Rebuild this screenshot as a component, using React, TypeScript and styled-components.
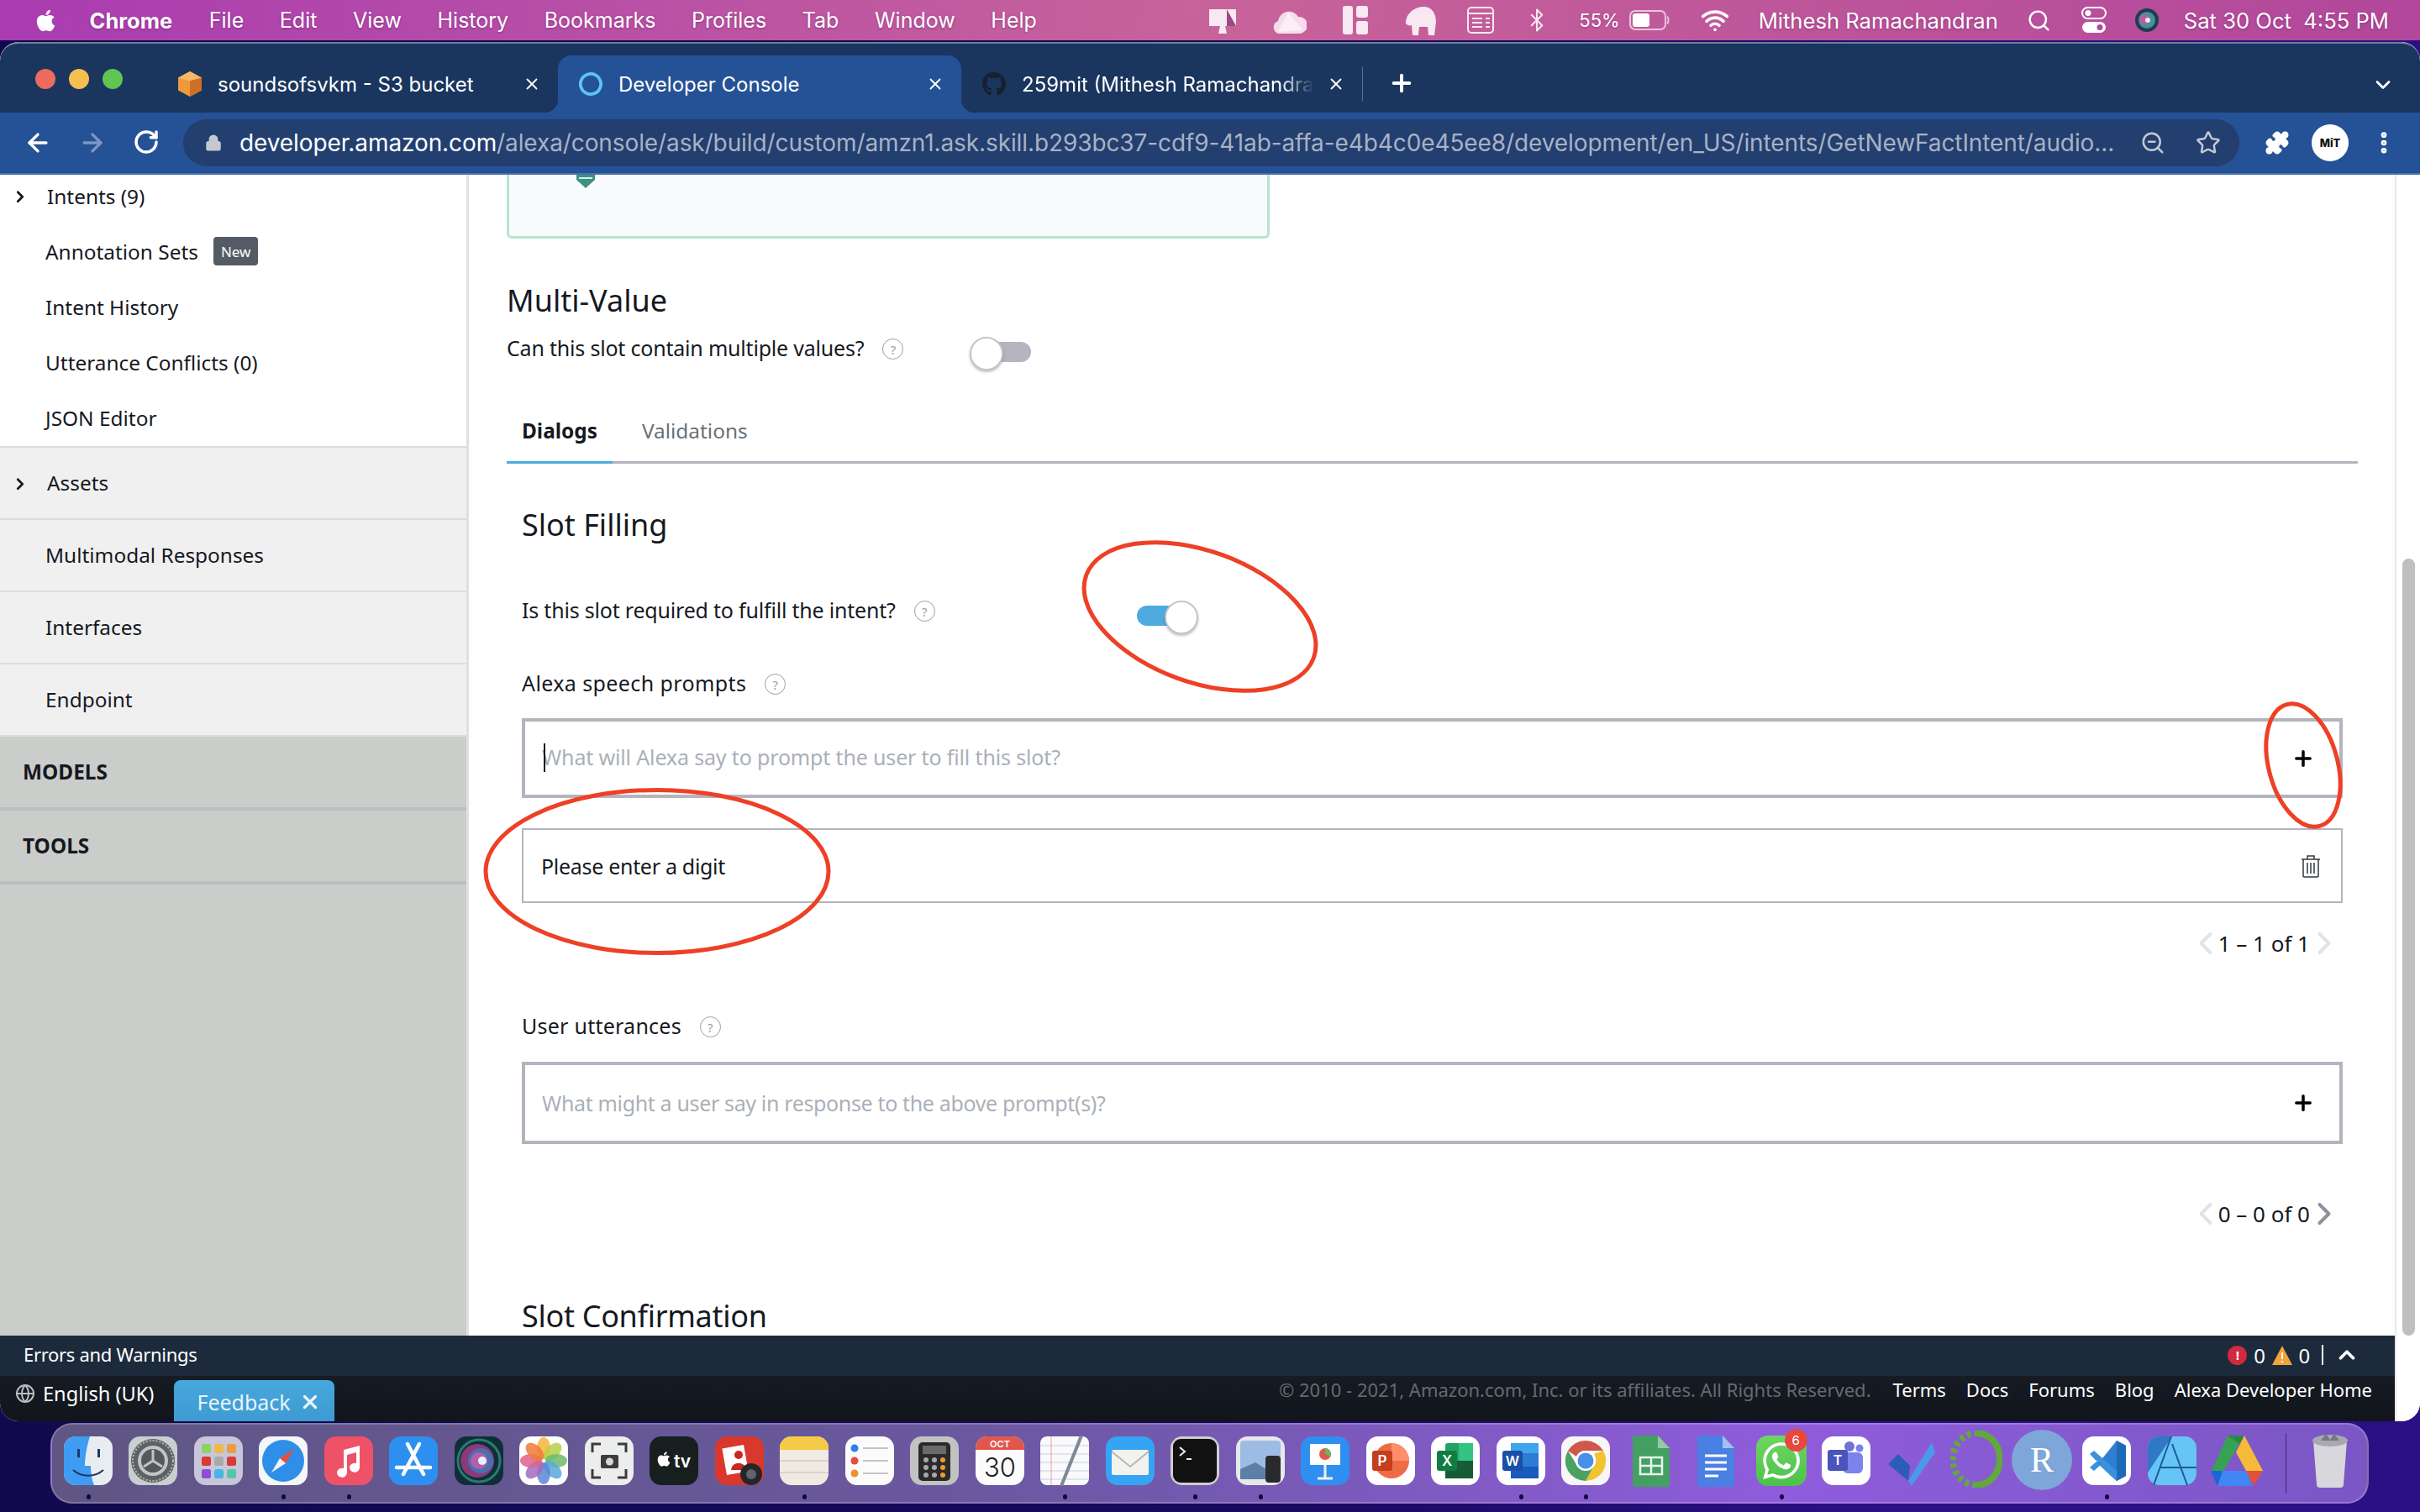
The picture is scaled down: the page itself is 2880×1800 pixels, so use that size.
import React from 'react'
import styled, { createGlobalStyle } from 'styled-components'
import {
    ArrowLeft, ArrowRight, Bluetooth, ChevronDown, ChevronLeft, ChevronRight, ChevronUp, Globe, Lock, MoreVertical,
    Plus, Puzzle, RotateCw, Search, Star, Wifi, X, ZoomOut,
} from 'lucide-react'
import { FaApple, FaGithub, FaWhatsapp } from 'react-icons/fa'

const GlobalStyle = createGlobalStyle`
    html, body {
        margin: 0;
        padding: 0;
        width: 2880px;
        height: 1800px;
        overflow: hidden;
    }

    * {
        box-sizing: border-box;
    }
`

const body = `"Noto Sans", "Liberation Sans", sans-serif`
const system = `Inter, "Liberation Sans", sans-serif`

const Screen = styled.div`
    width: 2880px;
    height: 1800px;
    display: flex;
    flex-direction: column;
    overflow: hidden;
    font-family: ${body};
    color: #16191f;
    background: linear-gradient(100deg, #0f0a4c 0%, #17095c 55%, #2a1084 80%, #2a1084 100%);
`

const MenuBar = styled.div`
    height: 48px;
    flex: none;
    display: flex;
    align-items: center;
    padding: 0 37px 0 40px;
    color: #fff;
    font-family: ${system};
    font-size: 25px;
    text-shadow: 0 1px 3px rgba(70, 0, 70, 0.35);
    background: linear-gradient(90deg, #a93cb1 0%, #c8639a 50%, #b2479b 100%);
`

const MenuGroup = styled.div`
    display: flex;
    align-items: center;
    gap: 42.6px;
`

const AppName = styled.span`
    font-weight: 700;
    margin: 0 1px 0 -5px;
    font-size: 25.5px;
`

const StatusGroup = styled.div`
    margin-left: auto;
    display: flex;
    align-items: center;
    font-size: 25.6px;
`

const StatusItem = styled.span<{ $ml: number }>`
    display: flex;
    align-items: center;
    margin-left: ${p => p.$ml}px;
`

const BatteryText = styled.span`
    font-size: 22px;
`

const Window = styled.div`
    height: 1642px;
    flex: none;
    margin-top: 2px;
    display: flex;
    flex-direction: column;
    border-radius: 22px;
    overflow: hidden;
    background: #fff;
`

const TabStrip = styled.div`
    height: 84px;
    flex: none;
    display: flex;
    align-items: flex-end;
    padding-left: 42px;
    color: #fff;
    font-family: ${system};
    font-size: 24px;
    background: #1a365f;
    border-top: 2px solid #6d7f9b;
    border-radius: 22px 22px 0 0;
`

const Lights = styled.div`
    display: flex;
    gap: 16px;
    margin-right: 41px;
    align-self: center;
    margin-top: 2px;
`

const Light = styled.span<{ $color: string }>`
    width: 24px;
    height: 24px;
    border-radius: 50%;
    background: ${p => p.$color};
`

const Tab = styled.div<{ $active?: boolean; $width: number }>`
    position: relative;
    width: ${p => p.$width}px;
    height: 68px;
    display: flex;
    align-items: center;
    padding: 0 20px 0 25px;
    border-radius: 16px 16px 0 0;
    background: ${p => (p.$active ? '#255296' : 'transparent')};

    ${p => p.$active && `
        &::before, &::after {
            content: '';
            position: absolute;
            bottom: 0;
            width: 16px;
            height: 16px;
        }

        &::before {
            left: -16px;
            background: radial-gradient(circle at 0 0, transparent 16px, #255296 16.5px);
        }

        &::after {
            right: -16px;
            background: radial-gradient(circle at 100% 0, transparent 16px, #255296 16.5px);
        }
    `}
`

const TabIcon = styled.span`
    width: 28px;
    height: 28px;
    flex: none;
    margin-right: 19px;
    display: flex;
    align-items: center;
    justify-content: center;
`

const TabTitle = styled.span<{ $fade?: boolean }>`
    flex: 1;
    min-width: 0;
    overflow: hidden;
    white-space: nowrap;
    ${p => p.$fade && `
        margin-right: 15px;
        -webkit-mask-image: linear-gradient(90deg, #000 88%, transparent 100%);
        mask-image: linear-gradient(90deg, #000 88%, transparent 100%);
    `}
`

const TabSeparator = styled.span`
    width: 1px;
    height: 40px;
    margin-bottom: 14px;
    background: #5d7394;
`

const NewTab = styled.span`
    display: flex;
    margin: 0 0 19px 30px;
`

const TabMenu = styled.span`
    display: flex;
    margin: 0 30px 19px auto;
`

const Toolbar = styled.div`
    height: 74px;
    flex: none;
    display: flex;
    align-items: center;
    padding: 0 29px 0 28px;
    color: #fff;
    background: #255296;
    border-bottom: 2px solid #4a6ea8;
`

const NavGroup = styled.div`
    display: flex;
    gap: 31px;
    margin-right: 28px;
`

const AddressBar = styled.div`
    width: 2447px;
    height: 56px;
    flex: none;
    display: flex;
    align-items: center;
    padding: 0 22px 0 26px;
    border-radius: 28px;
    background: #223f70;
    color: #c3c8d2;
`

const Url = styled.span`
    flex: 1;
    margin-left: 21px;
    min-width: 0;
    white-space: nowrap;
    overflow: hidden;
    font-family: ${system};
    font-size: 28px;
    letter-spacing: -0.1px;
    color: #a9b2c3;

    b {
        font-weight: 400;
        color: #fff;
    }
`

const AddressActions = styled.div`
    display: flex;
    gap: 36px;
    margin-left: 20px;
`

const ToolbarActions = styled.div`
    display: flex;
    align-items: center;
    gap: 26px;
    margin-left: 30px;
`

const Avatar = styled.span`
    width: 44px;
    height: 44px;
    border-radius: 50%;
    display: flex;
    align-items: center;
    justify-content: center;
    background: #fff;
    color: #111;
    font-family: ${system};
    font-size: 13px;
    font-weight: 800;
`

const Viewport = styled.div`
    flex: 1;
    min-height: 0;
    display: flex;
`

const PageColumn = styled.div`
    width: 2850px;
    display: flex;
    flex-direction: column;
`

const Columns = styled.div`
    height: 1382px;
    flex: none;
    display: flex;
    overflow: hidden;
`

const Sidebar = styled.nav`
    width: 558px;
    flex: none;
    overflow: hidden;
    background: #cbcdcb;
    border-right: 3px solid #dfe0e0;
    font-size: 24.4px;
`

const WhiteList = styled.div`
    margin-top: -8px;
    background: #fff;
    border-bottom: 2px solid #dcdcdc;
`

const SideRow = styled.div`
    height: 66.2px;
    display: flex;
    align-items: center;
    padding-left: 54px;
    position: relative;
`

const GreyRow = styled.div`
    height: 86px;
    display: flex;
    align-items: center;
    padding-left: 54px;
    position: relative;
    background: #f0f0f0;
    border-bottom: 2px solid #dcdcdc;
`

const SectionRow = styled.div`
    height: 88px;
    display: flex;
    align-items: center;
    padding-left: 27px;
    font-weight: 700;
    border-bottom: 4px solid #bdbebe;
`

const Caret = styled.span`
    position: absolute;
    left: 13px;
    top: 50%;
    transform: translateY(-44%);
    display: flex;
`

const CaretLabel = styled.span`
    margin-left: 2px;
`

const Badge = styled.span`
    height: 34px;
    margin-left: 18px;
    padding: 0 9px;
    display: flex;
    align-items: center;
    border-radius: 4px;
    background: #545b64;
    color: #fff;
    font-size: 17px;
`

const Main = styled.main`
    position: relative;
    flex: 1;
    overflow: hidden;
    padding: 0 44px 0 45px;
    background: #fff;
`

const Annotations = styled.svg`
    position: absolute;
    left: 0;
    top: 0;
    pointer-events: none;
`

const NoticeCard = styled.div`
    width: 908px;
    height: 76px;
    padding-left: 73px;
    overflow: hidden;
    background: #f7fbfb;
    border: 3px solid #b5e5cf;
    border-top: 0;
    border-radius: 0 0 6px 6px;
`

const BugMark = styled.svg`
    display: block;
    margin-top: -14px;
`

const Heading = styled.h2<{ $top: number; $spacing?: number }>`
    height: 44px;
    margin: ${p => p.$top}px 0 0;
    font-size: 36px;
    line-height: 44px;
    font-weight: 400;
    letter-spacing: ${p => p.$spacing ?? 0}px;
    color: #16191f;
`

const FieldRow = styled.div<{ $top: number; $label: number; $toggleDrop: number }>`
    height: 40px;
    margin-top: ${p => p.$top}px;
    display: grid;
    grid-template-columns: ${p => p.$label}px auto;
    align-items: center;

    & > :last-child {
        margin-top: ${p => p.$toggleDrop}px;
    }
`

const Label = styled.div<{ $top?: number; $spacing: number }>`
    height: 40px;
    margin-top: ${p => p.$top ?? 0}px;
    display: flex;
    align-items: center;
    font-size: 25px;
    letter-spacing: ${p => p.$spacing}px;
    white-space: nowrap;
`

const Help = styled.span`
    width: 25px;
    height: 25px;
    flex: none;
    margin-left: 22px;
    margin-top: 3px;
    display: flex;
    align-items: center;
    justify-content: center;
    border: 1px solid #9a9ea6;
    border-radius: 50%;
    color: #9a9ea6;
    font-size: 15px;
`

const ToggleTrack = styled.span<{ $on?: boolean }>`
    position: relative;
    width: 73px;
    height: 24px;
    display: block;
    border-radius: 12px;
    background: ${p => (p.$on ? 'linear-gradient(90deg, #4dabe0 75%, transparent 75%)' : 'linear-gradient(90deg, transparent 25%, #b5b5bf 25%)')};

    &::after {
        content: '';
        position: absolute;
        top: -6px;
        ${p => (p.$on ? 'right: 0;' : 'left: 0;')}
        width: 36px;
        height: 36px;
        border-radius: 50%;
        background: #fff;
        border: 2px solid #c4c6cc;
        box-shadow: 0 2px 3px rgba(0, 0, 0, 0.25);
    }
`

const TabBar = styled.div`
    height: 77px;
    margin-top: 41px;
    display: flex;
    gap: 17px;
    border-bottom: 3px solid #b4b4be;
    font-size: 24.4px;
`

const TabLink = styled.div<{ $active?: boolean }>`
    height: 74px;
    padding: 0 18px;
    display: flex;
    align-items: center;
    font-weight: ${p => (p.$active ? 700 : 400)};
    color: ${p => (p.$active ? '#16191f' : '#687078')};
    box-shadow: ${p => (p.$active ? '0 3px 0 #4dabe0' : 'none')};
`

const Section = styled.section`
    padding: 0 18px;
`

const InputBox = styled.div<{ $top: number; $height: number }>`
    height: ${p => p.$height}px;
    margin-top: ${p => p.$top}px;
    display: flex;
    align-items: center;
    padding: 0 29px 0 20px;
    border: 4px solid #b4b4be;
    font-size: 25px;
    color: #aab0b8;
    position: relative;
`

const InputText = styled.span<{ $spacing: number; $lift?: number }>`
    flex: 1;
    margin-bottom: ${p => p.$lift ?? 0}px;
    letter-spacing: ${p => p.$spacing}px;
`

const Caretline = styled.span`
    position: absolute;
    left: 22px;
    top: 26px;
    width: 2px;
    height: 34px;
    background: #16191f;
`

const PromptRow = styled.div`
    height: 89px;
    margin-top: 36px;
    display: flex;
    align-items: center;
    padding: 0 24px 0 21px;
    border: 2px solid #b4b4be;
    font-size: 25px;
`

const PromptText = styled.span`
    flex: 1;
    letter-spacing: -0.3px;
`

const Pager = styled.div<{ $top: number }>`
    height: 40px;
    margin-top: ${p => p.$top}px;
    display: flex;
    align-items: center;
    justify-content: flex-end;
    font-size: 26px;
`

const PagerArrow = styled.span<{ $side: 'left' | 'right' }>`
    display: flex;
    margin: ${p => (p.$side === 'left' ? '0 -7px 0 0' : '0 0 0 -5px')};
`

const Scrollbar = styled.div`
    width: 30px;
    flex: none;
    padding: 457px 6px 102px 7px;
    background: #fff;
    border-left: 2px solid #e8e8e8;
`

const Thumb = styled.div`
    height: 100%;
    border-radius: 9px;
    background: #bfbfbf;
`

const ErrorBar = styled.div`
    height: 48px;
    flex: none;
    display: flex;
    align-items: center;
    padding: 0 42px 4px 28px;
    background: #1c2a3b;
    color: #fff;
    font-size: 22px;
    letter-spacing: -0.3px;
`

const Counters = styled.div`
    margin-left: auto;
    display: flex;
    align-items: center;
    gap: 8px;
    font-size: 24px;
    padding-top: 2px;
`

const ErrorDot = styled.span`
    width: 23px;
    height: 23px;
    border-radius: 50%;
    display: flex;
    align-items: center;
    justify-content: center;
    background: #d1293d;
    font-size: 15px;
    font-weight: 700;
`

const CounterRule = styled.span`
    width: 2px;
    height: 24px;
    background: #fff;
    margin: 0 5px 0 6px;
`

const FooterBar = styled.div`
    height: 54px;
    flex: none;
    display: flex;
    align-items: flex-start;
    padding: 0 27px 0 18px;
    background: linear-gradient(180deg, #161b24, #11151b);
    color: #fff;
    font-size: 23.6px;
`

const Language = styled.div`
    height: 42px;
    display: flex;
    align-items: center;
    gap: 9px;
`

const FeedbackTab = styled.div`
    width: 191px;
    height: 49px;
    margin: 5px 0 0 24px;
    padding: 2px 0 0 27px;
    display: flex;
    align-items: center;
    gap: 10px;
    border-radius: 8px 8px 0 0;
    background: linear-gradient(180deg, #46a8dd, #3f9ad2);
    font-size: 25px;
    color: #e8f4fb;
`

const Legal = styled.div`
    margin-left: auto;
    height: 32px;
    display: flex;
    align-items: center;
    gap: 24px;
    font-size: 22px;
`

const Copyright = styled.span`
    color: #666a70;
    margin-right: 2px;
`

const Dock = styled.div`
    width: 2759px;
    height: 96px;
    flex: none;
    margin: 2px 0 0 60px;
    padding: 0 0 0 4px;
    display: flex;
    border: 2px solid rgba(255, 255, 255, 0.2);
    border-radius: 26px;
    background: linear-gradient(90deg, #5f5684 0%, #6a58a0 40%, #8f5cdc 75%, #7a57c4 100%);
`

const DockItem = styled.div<{ $ml?: number }>`
    position: relative;
    width: 77.5px;
    flex: none;
    margin-left: ${p => p.$ml ?? 0}px;
    padding-top: 13px;
    display: flex;
    justify-content: center;
`

const DockDot = styled.span`
    position: absolute;
    left: 50%;
    bottom: 3px;
    width: 5px;
    height: 6px;
    margin-left: -2px;
    border-radius: 50%;
    background: #0c0840;
`

const DockRule = styled.span`
    width: 1px;
    height: 72px;
    margin: 10px 0 0 19px;
    background: #3c2a78;
`

function HelpMark() {
    return <Help>?</Help>
}

function Tile({ fill, children, r = 14 }: { fill: string; children?: React.ReactNode; r?: number }) {
    return (
        <svg width="60" height="60" viewBox="0 0 60 60">
            <rect x="1" y="1" width="58" height="58" rx={r} fill={fill} />
            {children}
        </svg>
    )
}

const dockIcons: { name: string; dot?: boolean; node: React.ReactNode }[] = [
    {
        name: 'Finder', dot: true, node: (
            <Tile fill="#e9edf2">
                <path d="M15 1 H32 C28 14 26 26 26 36 H33 C33 44 34 52 37 59 H15 A14 14 0 0 1 1 45 V15 A14 14 0 0 1 15 1Z" fill="#3f9cf2" />
                <rect x="17" y="16" width="3" height="10" fill="#173a64" />
                <rect x="41" y="16" width="3" height="10" fill="#173a64" />
                <path d="M12 41 C22 50 38 50 48 41" fill="none" stroke="#173a64" strokeWidth="2" />
            </Tile>
        ),
    },
    {
        name: 'System Preferences', node: (
            <Tile fill="#c8cfd1">
                <circle cx="30" cy="30" r="26" fill="#5e6163" />
                <circle cx="30" cy="30" r="24" fill="none" stroke="#b4b8ba" strokeWidth="2" strokeDasharray="2 2" />
                <circle cx="30" cy="30" r="18" fill="#c0c4c6" />
                <circle cx="30" cy="30" r="14" fill="#55585a" />
                <path d="M30 30 V17 M30 30 L19 37 M30 30 L41 37" stroke="#c0c4c6" strokeWidth="3" />
            </Tile>
        ),
    },
    {
        name: 'Launchpad', node: (
            <Tile fill="#c8c6da">
                {['#8ed35e', '#efb84a', '#ef9c3c', '#d83a34', '#a9a9a9', '#d83a34', '#8c4fd8', '#46b6e8', '#56c6a6'].map((c, i) => (
                    <rect key={c + i} x={10 + (i % 3) * 15} y={10 + Math.floor(i / 3) * 15} width="11" height="11" rx="2.5" fill={c} />
                ))}
            </Tile>
        ),
    },
    {
        name: 'Safari', dot: true, node: (
            <Tile fill="#f5f6f7">
                <circle cx="30" cy="30" r="25" fill="#2f8fe8" />
                <path d="M43 16 L26 27 L33 33Z" fill="#ee4a3a" />
                <path d="M16 44 L26 27 L33 33Z" fill="#f2f2f2" />
            </Tile>
        ),
    },
    {
        name: 'Music', dot: true, node: (
            <Tile fill="#ee5266">
                <path d="M24 17 L43 12 V38 A6 5.5 0 1 1 39 33 V20 L28 23 V44 A6 5.5 0 1 1 24 39Z" fill="#fff" />
            </Tile>
        ),
    },
    {
        name: 'App Store', node: (
            <Tile fill="#2d8ff0">
                <path d="M23 10 L42 46 M37 10 L18 46 M10 38 H50" stroke="#fff" strokeWidth="4.5" strokeLinecap="round" />
            </Tile>
        ),
    },
    {
        name: 'Siri', node: (
            <Tile fill="#0f2f38">
                <circle cx="30" cy="30" r="25" fill="none" stroke="#2a7a70" strokeWidth="3" />
                <circle cx="28" cy="30" r="20" fill="#8a3a78" />
                <circle cx="32" cy="30" r="15" fill="#4a6fb0" />
                <circle cx="30" cy="30" r="10" fill="#b45fa8" />
                <circle cx="34" cy="30" r="5" fill="#e8f0ff" />
            </Tile>
        ),
    },
    {
        name: 'Photos', node: (
            <Tile fill="#fff">
                {['#f2b63c', '#b9cf4a', '#6dbb6a', '#5aa8d8', '#5d86d6', '#a16bc0', '#e0628a', '#ee7a3a'].map((c, i) => (
                    <ellipse key={c} cx="30" cy="15" rx="8" ry="13" fill={c} opacity="0.85" transform={`rotate(${i * 45} 30 30)`} />
                ))}
            </Tile>
        ),
    },
    {
        name: 'Screenshot', node: (
            <Tile fill="#eceded">
                <path d="M10 20 V10 H20 M40 10 H50 V20 M50 40 V50 H40 M20 50 H10 V40" fill="none" stroke="#3c3c3e" strokeWidth="3" />
                <rect x="20" y="23" width="21" height="16" rx="2" fill="#3c3c3e" />
                <circle cx="30.5" cy="31" r="4.5" fill="#d8d8d8" />
            </Tile>
        ),
    },
    {
        name: 'TV', node: (
            <Tile fill="#17201f">
                <FaApple x="8" y="18" size={20} color="#fff" />
                <text x="40" y="38" textAnchor="middle" fill="#fff" fontFamily="Inter, sans-serif" fontSize="21" fontWeight="600">tv</text>
            </Tile>
        ),
    },
    {
        name: 'Photo Booth', node: (
            <Tile fill="#d8392c">
                <rect x="12" y="13" width="26" height="32" fill="#fff" transform="rotate(-10 25 29)" />
                <circle cx="29" cy="23" r="5" fill="#c8281e" />
                <path d="M20 41 C21 30 37 30 38 41Z" fill="#c8281e" />
                <circle cx="44" cy="46" r="13" fill="#26262a" />
                <circle cx="44" cy="46" r="6" fill="#61636a" />
            </Tile>
        ),
    },
    {
        name: 'Notes', dot: true, node: (
            <Tile fill="#efebe3">
                <path d="M1 15 A14 14 0 0 1 15 1 H45 A14 14 0 0 1 59 15 V17 H1Z" fill="#f6ca46" />
                <path d="M1 30 H59 M1 44 H59" stroke="#d8d4cc" strokeWidth="2" />
            </Tile>
        ),
    },
    {
        name: 'Reminders', node: (
            <Tile fill="#fbfbfb">
                <circle cx="12" cy="15" r="4.5" fill="#2f7fe8" />
                <circle cx="12" cy="30" r="4.5" fill="#e84a3c" />
                <circle cx="12" cy="45" r="4.5" fill="#ee9230" />
                <path d="M22 15 H52 M22 30 H52 M22 45 H52" stroke="#c4c4c4" strokeWidth="2" />
            </Tile>
        ),
    },
    {
        name: 'Calculator', node: (
            <Tile fill="#c2c2c2">
                <rect x="11" y="8" width="38" height="46" rx="5" fill="#2a2a2c" />
                <rect x="16" y="12" width="28" height="10" fill="#6a6a6a" />
                {[0, 1, 2, 3, 4, 5, 6, 7, 8].map(i => (
                    <circle key={i} cx={20 + (i % 3) * 10} cy={29 + Math.floor(i / 3) * 9} r="3" fill={i % 3 === 2 ? '#ee9a30' : '#a8a8a8'} />
                ))}
            </Tile>
        ),
    },
    {
        name: 'Calendar', node: (
            <Tile fill="#fbfbfb">
                <path d="M1 17 V15 A14 14 0 0 1 15 1 H45 A14 14 0 0 1 59 15 V17Z" fill="#e2574c" />
                <text x="30" y="14" textAnchor="middle" fill="#fff" fontFamily="Inter, sans-serif" fontSize="11" fontWeight="600">OCT</text>
                <text x="30" y="49" textAnchor="middle" fill="#222" fontFamily="Inter, sans-serif" fontSize="31" fontWeight="300">30</text>
            </Tile>
        ),
    },
    {
        name: 'TextEdit', dot: true, node: (
            <Tile fill="#fafafa" r={8}>
                <path d="M1 12 H59 M1 22 H59 M1 32 H59 M1 42 H59 M1 52 H59" stroke="#c8cde8" strokeWidth="1" />
                <path d="M14 1 V59" stroke="#e8a0a0" strokeWidth="1" />
                <path d="M50 0 L26 60" stroke="#7d8a96" strokeWidth="4" />
            </Tile>
        ),
    },
    {
        name: 'Mail', node: (
            <Tile fill="#35a4f2">
                <rect x="8" y="17" width="44" height="30" rx="2" fill="#f2f2ee" />
                <path d="M8 19 L30 37 L52 19" fill="none" stroke="#b8b8b0" strokeWidth="2" />
            </Tile>
        ),
    },
    {
        name: 'Terminal', dot: true, node: (
            <Tile fill="#cfcfcf">
                <rect x="4" y="4" width="52" height="52" rx="9" fill="#111" />
                <path d="M12 14 L18 19 L12 24 M20 28 H26" fill="none" stroke="#eee" strokeWidth="2" />
            </Tile>
        ),
    },
    {
        name: 'Preview', dot: true, node: (
            <Tile fill="#e6e8ea">
                <rect x="6" y="6" width="48" height="46" rx="4" fill="#9cbce4" />
                <path d="M6 40 L24 32 L40 42 L54 36 V52 H6Z" fill="#5c7fa6" />
                <rect x="36" y="24" width="18" height="32" rx="4" fill="#2a2a2e" />
            </Tile>
        ),
    },
    {
        name: 'Keynote', node: (
            <Tile fill="#2f8ff0">
                <rect x="12" y="10" width="36" height="25" fill="#fff" />
                <circle cx="30" cy="22" r="7" fill="#e2574c" />
                <path d="M30 22 V15 A7 7 0 0 1 36 25Z" fill="#5dbb63" />
                <path d="M30 35 V50 M21 51 H39" stroke="#f0f0f0" strokeWidth="3" />
            </Tile>
        ),
    },
    {
        name: 'PowerPoint', node: (
            <Tile fill="#fff">
                <circle cx="31" cy="30" r="21" fill="#ed6c47" />
                <path d="M31 9 A21 21 0 0 1 52 30 H31Z" fill="#ff8f6b" />
                <rect x="8" y="18" width="24" height="24" rx="3" fill="#c43e1c" />
                <text x="20" y="36" textAnchor="middle" fill="#fff" fontFamily="Inter, sans-serif" fontSize="17" fontWeight="600">P</text>
            </Tile>
        ),
    },
    {
        name: 'Excel', node: (
            <Tile fill="#fff">
                <rect x="18" y="9" width="33" height="42" rx="3" fill="#21a366" />
                <rect x="34" y="9" width="17" height="21" fill="#33c481" />
                <rect x="18" y="30" width="33" height="21" fill="#185c37" />
                <rect x="8" y="18" width="24" height="24" rx="3" fill="#107c41" />
                <text x="20" y="36" textAnchor="middle" fill="#fff" fontFamily="Inter, sans-serif" fontSize="17" fontWeight="600">X</text>
            </Tile>
        ),
    },
    {
        name: 'Word', dot: true, node: (
            <Tile fill="#fff">
                <rect x="18" y="9" width="33" height="42" rx="3" fill="#2b7cd3" />
                <rect x="18" y="9" width="33" height="12" fill="#41a5ee" />
                <rect x="18" y="37" width="33" height="14" fill="#185abd" />
                <rect x="8" y="18" width="24" height="24" rx="3" fill="#1a4fa8" />
                <text x="20" y="36" textAnchor="middle" fill="#fff" fontFamily="Inter, sans-serif" fontSize="16" fontWeight="600">W</text>
            </Tile>
        ),
    },
    {
        name: 'Chrome', dot: true, node: (
            <Tile fill="#f7f7f7">
                <path d="M30 6 A24 24 0 0 1 51 18 H30 A12 12 0 0 0 19 25 L9 18 A24 24 0 0 1 30 6Z" fill="#d0584a" />
                <path d="M51 18 A24 24 0 0 1 30 54 L40 36 A12 12 0 0 0 40 22Z" fill="#f2c230" />
                <path d="M30 54 A24 24 0 0 1 9 18 L20 36 A12 12 0 0 0 40 36Z" fill="#4aa260" />
                <circle cx="30" cy="30" r="12" fill="#fff" />
                <circle cx="30" cy="30" r="9.5" fill="#4a8fe8" />
            </Tile>
        ),
    },
    {
        name: 'Sheets', node: (
            <svg width="60" height="62" viewBox="0 0 60 62">
                <path d="M8 0 H38 L52 15 V58 A3 3 0 0 1 49 61 H11 A3 3 0 0 1 8 58Z" fill="#43a062" />
                <path d="M38 0 L52 15 H38Z" fill="#93c9a7" />
                <path d="M17 26 H43 V46 H17Z M17 36 H43 M30 26 V46" fill="none" stroke="#e8f4ec" strokeWidth="2.5" />
            </svg>
        ),
    },
    {
        name: 'Docs', node: (
            <svg width="60" height="62" viewBox="0 0 60 62">
                <path d="M8 0 H38 L52 15 V58 A3 3 0 0 1 49 61 H11 A3 3 0 0 1 8 58Z" fill="#4a7fe4" />
                <path d="M38 0 L52 15 H38Z" fill="#a3c0f2" />
                <path d="M17 24 H43 M17 32 H43 M17 40 H43 M17 48 H33" stroke="#fff" strokeWidth="3" />
            </svg>
        ),
    },
    {
        name: 'WhatsApp', dot: true, node: (
            <WhatsAppTile />
        ),
    },
    {
        name: 'Teams', node: (
            <Tile fill="#fff">
                <rect x="26" y="20" width="24" height="25" rx="6" fill="#7b83eb" />
                <circle cx="34" cy="13" r="6" fill="#6b73d8" />
                <circle cx="46" cy="15" r="4.5" fill="#7b83eb" />
                <rect x="8" y="17" width="24" height="25" rx="3" fill="#4b53bc" />
                <text x="20" y="35" textAnchor="middle" fill="#fff" fontFamily="Inter, sans-serif" fontSize="16" fontWeight="600">T</text>
            </Tile>
        ),
    },
    {
        name: 'To Do', node: (
            <svg width="60" height="60" viewBox="0 0 60 60">
                <path d="M2 34 L14 22 L28 36 L26 54Z" fill="#2a5cb8" />
                <path d="M26 54 L54 8 L58 20 L30 60Z" fill="#4a9ae8" />
            </svg>
        ),
    },
    {
        name: 'Ring', node: (
            <svg width="62" height="68" viewBox="0 0 62 68" style={{ marginTop: -6 }}>
                <path d="M31 3 A28 31 0 0 1 31 65" fill="none" stroke="#62a83c" strokeWidth="8" />
                <path d="M31 65 A28 31 0 0 1 31 3" fill="none" stroke="#62a83c" strokeWidth="8" strokeDasharray="5 4" />
            </svg>
        ),
    },
    {
        name: 'R', node: (
            <svg width="72" height="72" viewBox="0 0 72 72" style={{ marginTop: -7 }}>
                <circle cx="36" cy="36" r="36" fill="#7fa6d8" />
                <text x="36" y="50" textAnchor="middle" fill="#fff" fontFamily="Liberation Serif, serif" fontSize="42">R</text>
            </svg>
        ),
    },
    {
        name: 'VS Code', dot: true, node: (
            <Tile fill="#fff">
                <path d="M42 6 L53 12 V48 L42 54 L18 32 L26 26Z" fill="#2f7fd0" />
                <path d="M42 6 V54 L53 48 V12Z" fill="#1f6ab8" />
                <path d="M10 22 L15 18 L42 42 V54 L34 47Z M10 38 L15 42 L24 34 L19 30Z" fill="#3a92dc" />
            </Tile>
        ),
    },
    {
        name: 'Affinity', node: (
            <Tile fill="#66c4f6">
                <path d="M1 15 A14 14 0 0 1 15 1 H30 L1 44Z" fill="#2f79c4" />
                <path d="M29 1 L8 59 M30 10 L48 59 M16 38 H59" stroke="#1c5a96" strokeWidth="2" fill="none" />
            </Tile>
        ),
    },
    {
        name: 'Drive', node: (
            <svg width="66" height="60" viewBox="0 0 66 60">
                <path d="M22 0 H42 L30 20 L16 44 L2 44Z" fill="#37a254" />
                <path d="M22 0 H42 L36 10 L28 4Z" fill="#2a8a44" />
                <path d="M42 0 L64 42 H44 L32 20Z" fill="#f5ba3a" />
                <path d="M15 42 H44 L52 60 H10Z" fill="#4285f4" />
                <path d="M2 42 H16 L10 60Z" fill="#1967d2" />
                <path d="M44 42 H64 L53 60Z" fill="#e0503c" />
            </svg>
        ),
    },
]

function WhatsAppTile() {
    return (
        <WhatsWrap>
            <FaWhatsapp size={50} color="#fff" />
            <WhatsBadge>6</WhatsBadge>
        </WhatsWrap>
    )
}

const WhatsWrap = styled.div`
    position: relative;
    width: 60px;
    height: 60px;
    display: flex;
    align-items: center;
    justify-content: center;
    border-radius: 14px;
    background: linear-gradient(180deg, #6ed663, #4cc24a);
`

const WhatsBadge = styled.span`
    position: absolute;
    top: -8px;
    right: -1px;
    width: 27px;
    height: 27px;
    display: flex;
    align-items: center;
    justify-content: center;
    border-radius: 50%;
    background: #e6483d;
    color: #fff;
    font-family: ${system};
    font-size: 15px;
`

function TabClose() {
    return <X size={22} strokeWidth={2} color="#fff" />
}

function TopBar() {
    return (
        <MenuBar>
            <MenuGroup>
                <FaApple size={29} />
                <AppName>Chrome</AppName>
                <span>File</span>
                <span>Edit</span>
                <span>View</span>
                <span>History</span>
                <span>Bookmarks</span>
                <span>Profiles</span>
                <span>Tab</span>
                <span>Window</span>
                <span>Help</span>
            </MenuGroup>
            <StatusGroup>
                <StatusItem $ml={0}>
                    <svg width="34" height="34" viewBox="0 0 34 34"><path d="M1 4 H33 V24 H1Z" fill="#f7e8f2" /><path d="M22 4 L33 24 H22Z" fill="#9c4a80" /><path d="M14 24 H20 L22 33 H12Z" fill="#f7e8f2" /></svg>
                </StatusItem>
                <StatusItem $ml={41}>
                    <svg width="42" height="36" viewBox="0 0 42 36"><path d="M8 34 A8 8 0 0 1 8 19 A13 13 0 0 1 32 14 A10 10 0 0 1 34 34Z" fill="#f6dcea" /><path d="M20 8 L38 30 L8 32Z" fill="#fff" opacity="0.5" /></svg>
                </StatusItem>
                <StatusItem $ml={43}>
                    <svg width="30" height="34" viewBox="0 0 30 34"><rect width="12" height="34" rx="3" fill="#f7e8f2" /><rect x="16" width="14" height="14" rx="3" fill="#f7e8f2" /><rect x="16" y="18" width="14" height="16" rx="3" fill="#f7e8f2" /></svg>
                </StatusItem>
                <StatusItem $ml={41}>
                    <svg width="42" height="36" viewBox="0 0 42 36"><path d="M4 22 C4 10 14 2 26 2 C36 2 40 12 40 20 L38 36 H31 L30 26 H20 L19 36 H12 L11 24 C8 25 6 24 4 22Z" fill="#f7e8f2" /></svg>
                </StatusItem>
                <StatusItem $ml={35}>
                    <svg width="32" height="32" viewBox="0 0 32 32"><rect x="1" y="1" width="30" height="30" rx="4" fill="none" stroke="#f7e8f2" strokeWidth="2" /><path d="M1 8 H31 M6 14 H18 M6 19 H18 M6 24 H18 M22 14 H27 M22 19 H27 M22 24 H27" stroke="#f7e8f2" strokeWidth="2" /></svg>
                </StatusItem>
                <StatusItem $ml={43}>
                    <Bluetooth size={30} color="#f7e8f2" strokeWidth={1.6} style={{ margin: '0 -7px' }} />
                </StatusItem>
                <StatusItem $ml={42}><BatteryText>55%</BatteryText></StatusItem>
                <StatusItem $ml={11}>
                    <svg width="48" height="24" viewBox="0 0 48 24"><rect x="1" y="1" width="42" height="22" rx="6" fill="none" stroke="#e8c4da" strokeWidth="2" /><rect x="4" y="4" width="20" height="16" rx="3" fill="#fff" /><path d="M45 8 C47 9 47 15 45 16" fill="none" stroke="#e8c4da" strokeWidth="2" /></svg>
                </StatusItem>
                <StatusItem $ml={37}><Wifi size={34} strokeWidth={2.6} /></StatusItem>
                <StatusItem $ml={35}>Mithesh Ramachandran</StatusItem>
                <StatusItem $ml={34}><Search size={29} strokeWidth={2} /></StatusItem>
                <StatusItem $ml={36}>
                    <svg width="30" height="32" viewBox="0 0 30 32"><rect x="1" y="1" width="28" height="13" rx="6.5" fill="none" stroke="#fff" strokeWidth="2" /><circle cx="8" cy="7.5" r="3.5" fill="#fff" /><rect x="1" y="18" width="28" height="13" rx="6.5" fill="#fff" /><circle cx="22" cy="24.5" r="3.5" fill="#b2479b" /></svg>
                </StatusItem>
                <StatusItem $ml={33}>
                    <svg width="30" height="30" viewBox="0 0 30 30"><circle cx="15" cy="15" r="14" fill="#1d3d50" /><circle cx="15" cy="15" r="10" fill="#4c8e9a" /><circle cx="12" cy="14" r="6" fill="#b45fa0" /><circle cx="16" cy="15" r="3" fill="#e8e8f8" /></svg>
                </StatusItem>
                <StatusItem $ml={29}>Sat 30 Oct&nbsp; 4:55 PM</StatusItem>
            </StatusGroup>
        </MenuBar>
    )
}

function BrowserTabs() {
    return (
        <TabStrip>
            <Lights>
                <Light $color="#ed6a5e" />
                <Light $color="#f5bf4f" />
                <Light $color="#61c554" />
            </Lights>
            <Tab $width={477}>
                <TabIcon>
                    <svg width="30" height="32" viewBox="0 0 30 32"><path d="M15 0 L30 8 V24 L15 32 L0 24 V8Z" fill="#ee9a3a" /><path d="M15 8 L30 8 V24 L15 32Z" fill="#cf6f24" /><path d="M15 0 L30 8 L15 12 L0 8Z" fill="#f6b867" /></svg>
                </TabIcon>
                <TabTitle>soundsofsvkm - S3 bucket</TabTitle>
                <TabClose />
            </Tab>
            <Tab $width={480} $active>
                <TabIcon>
                    <svg width="30" height="30" viewBox="0 0 30 30"><path d="M15 2 A13 13 0 1 1 8 26 L8 24" fill="none" stroke="#5bc6f4" strokeWidth="4" /><path d="M15 2 A13 13 0 0 0 8 26" fill="none" stroke="#5bc6f4" strokeWidth="4" /></svg>
                </TabIcon>
                <TabTitle>Developer Console</TabTitle>
                <TabClose />
            </Tab>
            <Tab $width={477}>
                <TabIcon><FaGithub size={30} color="#17202c" /></TabIcon>
                <TabTitle $fade>259mit (Mithesh Ramachandran</TabTitle>
                <TabClose />
            </Tab>
            <TabSeparator />
            <NewTab><Plus size={32} strokeWidth={3} /></NewTab>
            <TabMenu><ChevronDown size={28} strokeWidth={2.4} /></TabMenu>
        </TabStrip>
    )
}

function BrowserToolbar() {
    return (
        <Toolbar>
            <NavGroup>
                <ArrowLeft size={34} strokeWidth={2.4} />
                <ArrowRight size={34} strokeWidth={2.4} color="#7e97c2" />
                <RotateCw size={32} strokeWidth={2.6} />
            </NavGroup>
            <AddressBar>
                <Lock size={20} strokeWidth={3} fill="#c3c8d2" />
                <Url>
                    <b>developer.amazon.com</b>/alexa/console/ask/build/custom/amzn1.ask.skill.b293bc37-cdf9-41ab-affa-e4b4c0e45ee8/development/en_US/intents/GetNewFactIntent/audio...
                </Url>
                <AddressActions>
                    <ZoomOut size={30} strokeWidth={2} />
                    <Star size={30} strokeWidth={2} />
                </AddressActions>
            </AddressBar>
            <ToolbarActions>
                <Puzzle size={30} fill="#fff" strokeWidth={1.6} />
                <Avatar>MiT</Avatar>
                <MoreVertical size={32} strokeWidth={3} />
            </ToolbarActions>
        </Toolbar>
    )
}

function SideNav() {
    return (
        <Sidebar>
            <WhiteList>
                <SideRow><Caret><ChevronRight size={22} strokeWidth={3} /></Caret><CaretLabel>Intents (9)</CaretLabel></SideRow>
                <SideRow>Annotation Sets<Badge>New</Badge></SideRow>
                <SideRow>Intent History</SideRow>
                <SideRow>Utterance Conflicts (0)</SideRow>
                <SideRow>JSON Editor</SideRow>
            </WhiteList>
            <GreyRow><Caret><ChevronRight size={22} strokeWidth={3} /></Caret><CaretLabel>Assets</CaretLabel></GreyRow>
            <GreyRow>Multimodal Responses</GreyRow>
            <GreyRow>Interfaces</GreyRow>
            <GreyRow>Endpoint</GreyRow>
            <SectionRow>MODELS</SectionRow>
            <SectionRow>TOOLS</SectionRow>
        </Sidebar>
    )
}

function PagerRow({ top, text, nextColor }: { top: number; text: string; nextColor: string }) {
    return (
        <Pager $top={top}>
            <PagerArrow $side="left"><ChevronLeft size={44} strokeWidth={2.2} color="#e1e3e8" /></PagerArrow>
            {text}
            <PagerArrow $side="right"><ChevronRight size={44} strokeWidth={2.2} color={nextColor} /></PagerArrow>
        </Pager>
    )
}

function Content() {
    return (
        <Main>
            <NoticeCard>
                <BugMark width="36" height="30" viewBox="0 0 36 30">
                    <path d="M7 2 H29 V20 L18 30 L7 20Z" fill="#3f8f85" />
                    <path d="M10 8 H26 M10 13 H26 M10 18 H26" stroke="#d8eeea" strokeWidth="2" />
                    <path d="M6 12 L1 6 M30 12 L35 6" stroke="#3f8f85" strokeWidth="2" />
                </BugMark>
            </NoticeCard>
            <Heading $top={52}>Multi-Value</Heading>
            <FieldRow $top={14} $label={551} $toggleDrop={10}>
                <Label $spacing={-0.2}>Can this slot contain multiple values?<HelpMark /></Label>
                <ToggleTrack />
            </FieldRow>
            <TabBar>
                <TabLink $active>Dialogs</TabLink>
                <TabLink>Validations</TabLink>
            </TabBar>
            <Section>
                <Heading $top={51}>Slot Filling</Heading>
                <FieldRow $top={59} $label={732} $toggleDrop={14}>
                    <Label $spacing={-0.2}>Is this slot required to fulfill the intent?<HelpMark /></Label>
                    <ToggleTrack $on />
                </FieldRow>
                <Label $top={47} $spacing={0.4}>Alexa speech prompts<HelpMark /></Label>
                <InputBox $top={22} $height={95}>
                    <Caretline />
                    <InputText $spacing={-0.15} $lift={3}>What will Alexa say to prompt the user to fill this slot?</InputText>
                    <Plus size={28} strokeWidth={3} color="#000" />
                </InputBox>
                <PromptRow>
                    <PromptText>Please enter a digit</PromptText>
                    <svg width="24" height="28" viewBox="0 0 24 28" fill="none" stroke="#33383e" strokeWidth="1.5">
                        <path d="M1 6 H23 M8 6 V2 H16 V6 M3 6 V26 A1 1 0 0 0 4 27 H20 A1 1 0 0 0 21 26 V6 M8 10 V23 M12 10 V23 M16 10 V23" />
                    </svg>
                </PromptRow>
                <PagerRow top={28} text="1 – 1 of 1" nextColor="#e1e3e8" />
                <Label $top={58} $spacing={0.25}>User utterances<HelpMark /></Label>
                <InputBox $top={23} $height={98}>
                    <InputText $spacing={-0.35}>What might a user say in response to the above prompt(s)?</InputText>
                    <Plus size={28} strokeWidth={3} color="#000" />
                </InputBox>
                <PagerRow top={63} text="0 – 0 of 0" nextColor="#8f919e" />
                <Heading $top={80} $spacing={-0.3}>Slot Confirmation</Heading>
            </Section>
            <Annotations width="2292" height="1382" viewBox="0 0 2292 1382" fill="none" stroke="#ee4026" strokeWidth="5">
                <ellipse cx="870" cy="526" rx="144" ry="78" transform="rotate(20 870 526)" />
                <ellipse cx="224" cy="829.5" rx="204" ry="97" />
                <ellipse cx="2183" cy="703" rx="41" ry="75" transform="rotate(-15 2183 703)" />
            </Annotations>
        </Main>
    )
}

function PageFooter() {
    return (
        <>
            <ErrorBar>
                Errors and Warnings
                <Counters>
                    <ErrorDot>!</ErrorDot>
                    <span>0</span>
                    <svg width="24" height="23" viewBox="0 0 24 23"><path d="M12 0 L24 23 H0Z" fill="#f2a33a" /><path d="M12 8 V16 M12 18 V20" stroke="#fff" strokeWidth="2" /></svg>
                    <span>0</span>
                    <CounterRule />
                    <ChevronUp size={30} strokeWidth={3} />
                </Counters>
            </ErrorBar>
            <FooterBar>
                <Language>
                    <Globe size={24} color="#b8bcc2" />
                    English (UK)
                </Language>
                <FeedbackTab>Feedback<X size={26} strokeWidth={3} /></FeedbackTab>
                <Legal>
                    <Copyright>© 2010 - 2021, Amazon.com, Inc. or its affiliates. All Rights Reserved.</Copyright>
                    <span>Terms</span>
                    <span>Docs</span>
                    <span>Forums</span>
                    <span>Blog</span>
                    <span>Alexa Developer Home</span>
                </Legal>
            </FooterBar>
        </>
    )
}

function DockBar() {
    return (
        <Dock>
            {dockIcons.map(icon => (
                <DockItem key={icon.name}>
                    {icon.node}
                    {icon.dot ? <DockDot /> : null}
                </DockItem>
            ))}
            <DockRule />
            <DockItem $ml={13}>
                <svg width="46" height="66" viewBox="0 0 46 66" style={{ marginTop: -4 }}>
                    <path d="M3 10 H43 L39 62 A4 4 0 0 1 35 66 H11 A4 4 0 0 1 7 62Z" fill="#d8d8dc" />
                    <ellipse cx="23" cy="10" rx="21" ry="7" fill="#a8a8b0" />
                    <path d="M12 10 L18 2 L23 9 L28 2 L34 10" fill="#77777e" />
                </svg>
            </DockItem>
        </Dock>
    )
}

export default function App() {
    return (
        <Screen>
            <GlobalStyle />
            <TopBar />
            <Window>
                <BrowserTabs />
                <BrowserToolbar />
                <Viewport>
                    <PageColumn>
                        <Columns>
                            <SideNav />
                            <Content />
                        </Columns>
                        <PageFooter />
                    </PageColumn>
                    <Scrollbar><Thumb /></Scrollbar>
                </Viewport>
            </Window>
            <DockBar />
        </Screen>
    )
}
